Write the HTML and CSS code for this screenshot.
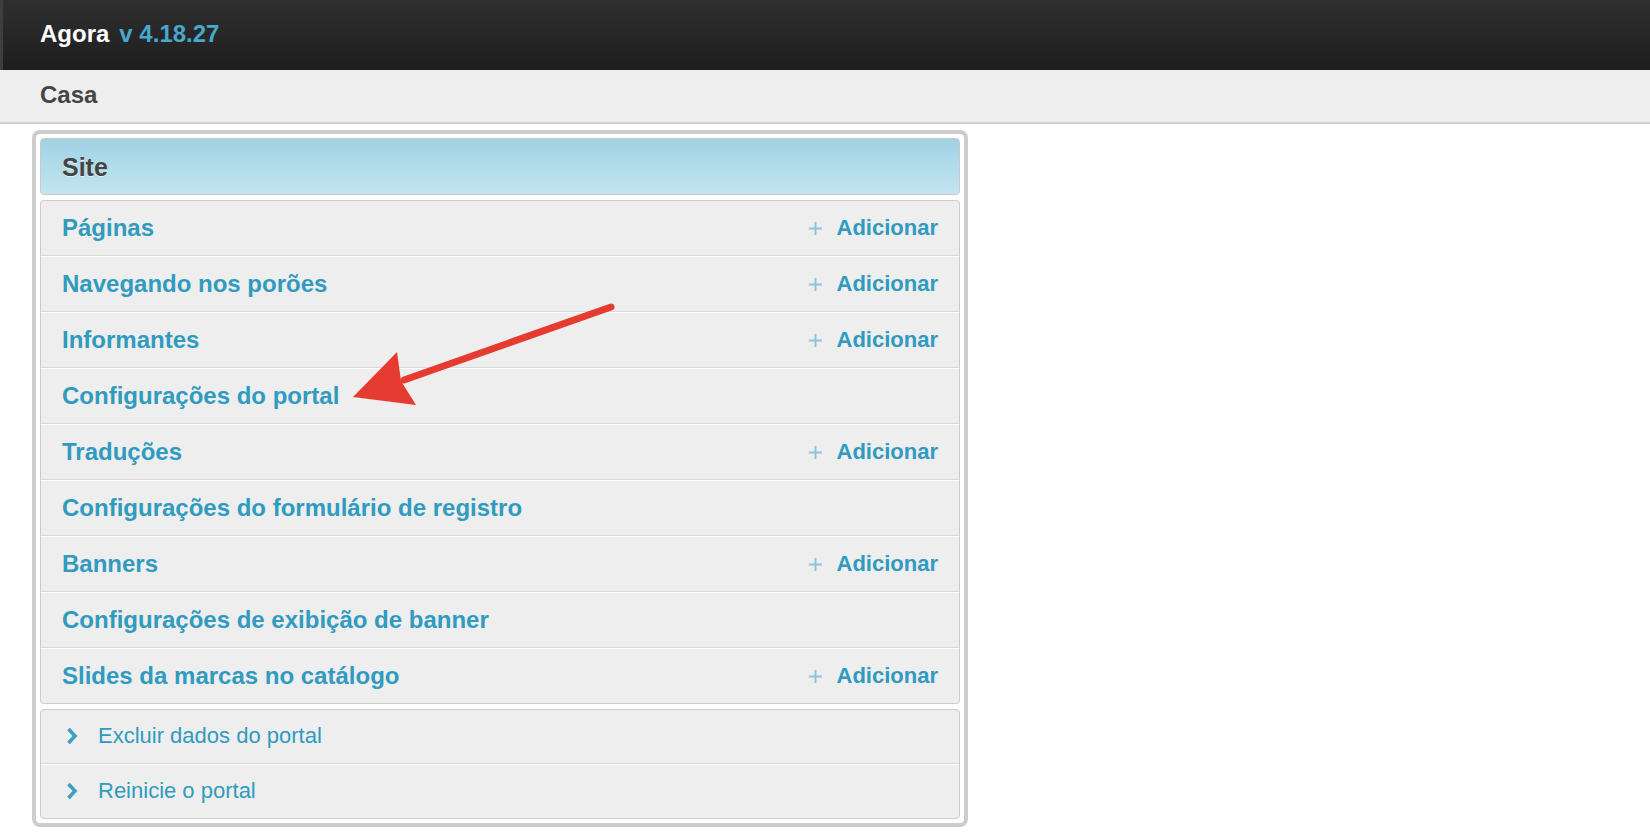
FILE: index.html
```html
<!DOCTYPE html>
<html lang="pt">
<head>
	<meta charset="UTF-8">
	<title>Agora</title>
	<link rel="stylesheet" href="styles.css">
</head>
<body>
	<div class="header">
		<span class="title">Agora</span><span class="version">v 4.18.27</span>
	</div>
	<div class="crumbs">Casa</div>

	<div class="content">
		<div class="panel">
			<h2 class="caption">Site</h2>
			<ul class="models">
				<li><a href="#">Páginas</a><a class="add" href="#"><svg class="plus" width="13" height="13" viewBox="0 0 13 13"><path d="M6.5 0v13M0 6.5h13"/></svg>Adicionar</a></li>
				<li><a href="#">Navegando nos porões</a><a class="add" href="#"><svg class="plus" width="13" height="13" viewBox="0 0 13 13"><path d="M6.5 0v13M0 6.5h13"/></svg>Adicionar</a></li>
				<li><a href="#">Informantes</a><a class="add" href="#"><svg class="plus" width="13" height="13" viewBox="0 0 13 13"><path d="M6.5 0v13M0 6.5h13"/></svg>Adicionar</a></li>
				<li><a href="#">Configurações do portal</a></li>
				<li><a href="#">Traduções</a><a class="add" href="#"><svg class="plus" width="13" height="13" viewBox="0 0 13 13"><path d="M6.5 0v13M0 6.5h13"/></svg>Adicionar</a></li>
				<li><a href="#">Configurações do formulário de registro</a></li>
				<li><a href="#">Banners</a><a class="add" href="#"><svg class="plus" width="13" height="13" viewBox="0 0 13 13"><path d="M6.5 0v13M0 6.5h13"/></svg>Adicionar</a></li>
				<li><a href="#">Configurações de exibição de banner</a></li>
				<li><a href="#">Slides da marcas no catálogo</a><a class="add" href="#"><svg class="plus" width="13" height="13" viewBox="0 0 13 13"><path d="M6.5 0v13M0 6.5h13"/></svg>Adicionar</a></li>
			</ul>
			<ul class="actions">
				<li><a href="#"><svg class="chev" width="12" height="18" viewBox="0 0 12 18"><polyline points="2.5,2 9,9 2.5,16"/></svg>Excluir dados do portal</a></li>
				<li><a href="#"><svg class="chev" width="12" height="18" viewBox="0 0 12 18"><polyline points="2.5,2 9,9 2.5,16"/></svg>Reinicie o portal</a></li>
			</ul>
		</div>
	</div>

	<!-- seta vermelha de anotação -->
	<svg class="mark" width="1650" height="836" viewBox="0 0 1650 836">
		<line x1="611" y1="307" x2="404" y2="380"/>
		<polygon points="353,397 397,352 401,381 416,405"/>
	</svg>
</body>
</html>
```

FILE: styles.css
```css
body{
	margin: 0;
	font-family: "Liberation Sans", Arial, sans-serif;
	background: #fff;
}
ul{
	padding: 0;
	margin: 0;
	list-style: none;
}
a{
	color: #309bbf;
	text-decoration: none;
}

.header{
	height: 70px;
	box-sizing: border-box;
	padding: 19px 40px 0;
	background: linear-gradient(#2f2f2f, #1e1e1e);
	box-shadow: inset 3px 0 0 #3e3e3e;
	font-size: 24px;
	line-height: 30px;
	font-weight: bold;
}
.title{
	color: #fff;
}
.version{
	color: #46a8cc;
	margin-left: 10px;
}

.crumbs{
	background: #eee;
	border-bottom: 2px solid #cfcfcf;
	padding: 10px 40px 12px;
	font-size: 24px;
	line-height: 30px;
	font-weight: bold;
	color: #444;
}

.content{
	padding: 6px 32px;
}
.panel{
	width: 920px;
	padding: 4px;
	border: 4px solid #ccc;
	border-radius: 8px;
	background: #fff;
}
.caption{
	margin: 0;
	padding: 13px 21px 12px;
	border: 1px solid #c9c9c9;
	border-radius: 4px;
	background: linear-gradient(#9fd2e4, #c3e5ef);
	font-size: 25px;
	line-height: 30px;
	color: #444;
	text-shadow: 0 1px 0 #dff0f6;
}

.models,
.actions{
	margin-top: 5px;
	background: #eee;
	border: 1px solid #ccc;
	border-radius: 4px;
}
.models li,
.actions li{
	border-top: 1px solid #fff;
	border-bottom: 1px solid #d8d8d8;
}
.models li:first-child,
.actions li:first-child{
	border-top: 0;
}
.models li:last-child,
.actions li:last-child{
	border-bottom: 0;
}
.models li{
	display: flex;
	justify-content: space-between;
	align-items: center;
	padding: 12px 21px;
	font-size: 24px;
	line-height: 30px;
	font-weight: bold;
}
.add{
	display: flex;
	align-items: center;
	font-size: 22px;
}
.plus{
	margin-right: 15px;
	stroke: #8fc5d9;
	stroke-width: 2;
	fill: none;
}

.actions li{
	padding: 12px 20px 13px;
	font-size: 22px;
	line-height: 28px;
}
.actions a{
	display: flex;
	align-items: center;
}
.chev{
	margin: 0 20px 0 5px;
	fill: none;
	stroke: #3f9fc2;
	stroke-width: 3.6;
}

.mark{
	position: absolute;
	top: 0;
	left: 0;
	pointer-events: none;
}
.mark line{
	stroke: #e53b30;
	stroke-width: 7;
	stroke-linecap: round;
}
.mark polygon{
	fill: #e53b30;
}
```
